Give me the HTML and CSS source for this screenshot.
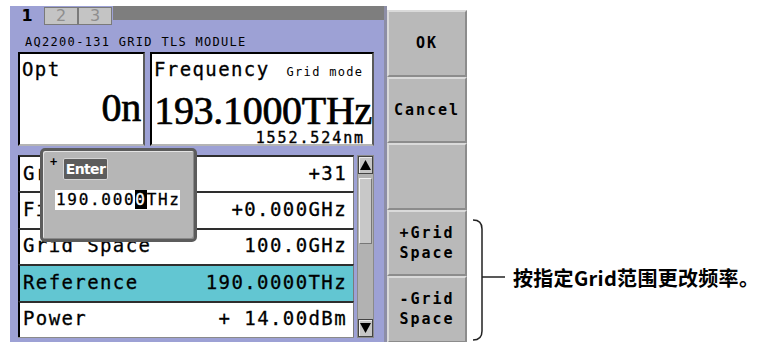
FILE: index.html
```html
<!DOCTYPE html>
<html lang="zh">
<head>
  <meta charset="UTF-8">
  <title>AQ2200-131 GRID TLS MODULE</title>
  <link rel="stylesheet" href="styles.css">
</head>
<body>
  <div class="page">
    <div class="device">
      <!-- LCD screen -->
      <div class="screen">
        <div class="tabs">
          <span class="tab active">1</span>
          <span class="tab">2</span>
          <span class="tab">3</span>
          <span class="tab-fill"></span>
        </div>
        <div class="title">AQ2200-131 GRID TLS MODULE</div>

        <div class="boxes">
          <div class="box opt">
            <div class="box-label">Opt</div>
            <div class="big">0n</div>
          </div>
          <div class="box freq">
            <div class="box-label">Frequency<span class="mode">Grid mode</span></div>
            <div class="big">193.1000THz</div>
            <div class="sub">1552.524nm</div>
          </div>
        </div>

        <div class="list-area">
          <div class="list">
            <div class="row"><span>Grid No.</span><span>+31</span></div>
            <div class="row"><span>Fine</span><span>+0.000GHz</span></div>
            <div class="row"><span>Grid Space</span><span>100.0GHz</span></div>
            <div class="row sel"><span>Reference</span><span>190.0000THz</span></div>
            <div class="row"><span>Power</span><span>+ 14.00dBm</span></div>
          </div>
          <div class="scroll">
            <div class="sbtn">
              <svg width="11" height="10" viewBox="0 0 11 10"><polygon points="5.5,0 11,10 0,10" fill="#000"/></svg>
            </div>
            <div class="thumb"></div>
            <div class="sbtn">
              <svg width="11" height="10" viewBox="0 0 11 10"><polygon points="0,0 11,0 5.5,10" fill="#000"/></svg>
            </div>
          </div>

          <!-- Enter dialog -->
          <div class="popup">
            <div class="popup-head">
              <span class="plus">+</span>
              <span class="enter">Enter</span>
            </div>
            <div class="field">190.000<span class="cursor">0</span>THz</div>
          </div>
        </div>
      </div>

      <!-- soft keys -->
      <div class="keys">
        <div class="key">OK</div>
        <div class="key">Cancel</div>
        <div class="key"></div>
        <div class="key">+Grid<br>Space</div>
        <div class="key">-Grid<br>Space</div>
      </div>
    </div>

    <div class="note">
      <svg class="bracket" width="40" height="124" viewBox="0 0 40 124">
        <path d="M3 2 Q12 2 12 11 L12 113 Q12 122 3 122" fill="none" stroke="#222" stroke-width="1.5"/>
        <line x1="12" y1="59" x2="35" y2="59" stroke="#222" stroke-width="1.5"/>
      </svg>
      <div class="note-text">按指定Grid范围更改频率。</div>
    </div>
  </div>
</body>
</html>
```

FILE: styles.css
```css
* {
  box-sizing: border-box;
}
body {
  margin: 0;
  background: #fff;
  color: #000;
  font-family: "DejaVu Sans Mono", monospace;
}
.page {
  display: flex;
  align-items: flex-start;
  height: 342px;
  padding: 6px 0 0 10px;
  overflow: hidden;
}
.device {
  display: flex;
  align-items: flex-start;
}

/* screen */
.screen {
  position: relative;
  width: 377px;
  height: 340px;
  background: #9da1d5;
  border-right: 3px solid #8d8ea6;
}
.tabs {
  display: flex;
  align-items: flex-start;
  height: 19px;
}
.tab {
  width: 34px;
  height: 18px;
  margin-top: 1px;
  border: 1px solid #7a7a7a;
  background: #c4c4c4;
  color: #8e8e8e;
  font: 16px/16px "DejaVu Sans", sans-serif;
  text-align: center;
}
.tab.active {
  height: 19px;
  margin-top: 0;
  padding-top: 2px;
  border: 0;
  background: transparent;
  color: #000;
  font-weight: bold;
}
.tab-fill {
  flex: 1;
  height: 14px;
  margin-left: 1px;
  background: #7e7e7e;
}
.title {
  height: 27px;
  padding: 11px 0 0 15px;
  font-size: 12px;
  line-height: 12px;
  letter-spacing: 1.3px;
}

.boxes {
  display: flex;
  gap: 5px;
  padding-left: 8px;
}
.box {
  height: 94px;
  padding: 5px 0 0 2px;
  background: #fff;
  border: 2px solid;
  border-color: #000 #5a5a5a #b4b4b4 #000;
  white-space: nowrap;
}
.opt {
  width: 127px;
}
.freq {
  width: 224px;
}
.box-label {
  font-size: 19px;
  line-height: 20px;
  letter-spacing: 1.4px;
  -webkit-text-stroke: 0.3px #000;
}
.mode {
  margin-left: 17px;
  font-size: 12px;
  letter-spacing: 1.3px;
  -webkit-text-stroke: 0;
}
.big {
  margin-top: 11px;
  padding-right: 2px;
  font: 40px/36px "Liberation Serif", serif;
  letter-spacing: -0.3px;
  -webkit-text-stroke: 0.7px #000;
  text-align: right;
}
.freq .big {
  padding-right: 0;
}
.sub {
  margin-top: 2px;
  padding-right: 7px;
  font-size: 15px;
  line-height: 14px;
  letter-spacing: 1.9px;
  -webkit-text-stroke: 0.4px #000;
  text-align: right;
}

/* parameter list */
.list-area {
  position: relative;
  display: flex;
  gap: 3px;
  margin: 9px 0 0 8px;
}
.list {
  display: grid;
  grid-template-rows: repeat(5, 1fr);
  width: 336px;
  height: 183px;
  border-bottom: 1px solid #8a8a8a;
}
.row {
  display: flex;
  justify-content: space-between;
  align-items: center;
  padding: 0 6px 3px 3px;
  background: #fff;
  border-top: 2px solid #2e2e2e;
  border-left: 2px solid #000;
  border-right: 1px solid #7a7a7a;
  font-size: 19px;
  line-height: 20px;
  letter-spacing: 1.4px;
  -webkit-text-stroke: 0.3px #000;
  white-space: nowrap;
}
.row.sel {
  background: #62c6d2;
}
.scroll {
  display: flex;
  flex-direction: column;
  width: 17px;
  height: 183px;
  background: #b2b2b2;
  border: 1px solid #8a8a8a;
}
.sbtn {
  display: flex;
  align-items: center;
  justify-content: center;
  height: 18px;
  background: #c6c6c6;
  border: 1px solid #444;
  box-shadow: inset 1px 1px 0 #ececec;
}
.thumb {
  height: 66px;
  margin: 4px 1px auto;
  background: #c8c8c8;
  border: 1px solid;
  border-color: #f4f4f4 #777 #777 #f4f4f4;
}

/* Enter dialog */
.popup {
  position: absolute;
  left: 22px;
  top: -7px;
  width: 157px;
  height: 94px;
  padding: 7px 0 0 7px;
  background: #b6b6b6;
  border: 3px solid #5c5c5c;
  border-radius: 5px;
  box-shadow: inset 1px 1px 0 #e4e4e4, inset -1px -1px 0 #8a8a8a;
}
.popup-head {
  display: flex;
  align-items: flex-start;
}
.plus {
  width: 13px;
  font-size: 12px;
  font-weight: bold;
  line-height: 9px;
}
.enter {
  width: 45px;
  height: 22px;
  background: #5c5c5c;
  border: 1px solid #d4d4d4;
  border-radius: 2px;
  color: #fff;
  font: bold 14px/20px "DejaVu Sans", sans-serif;
  letter-spacing: -0.6px;
  text-align: center;
}
.field {
  width: 125px;
  height: 20px;
  margin: 10px 0 0 5px;
  padding-left: 1px;
  background: #fff;
  font-size: 16px;
  line-height: 20px;
  letter-spacing: 1.7px;
  -webkit-text-stroke: 0.3px #000;
  white-space: nowrap;
}
.cursor {
  background: #000;
  color: #fff;
  -webkit-text-stroke: 0.3px #fff;
}

/* soft keys */
.keys {
  display: flex;
  flex-direction: column;
  width: 80px;
  margin-top: 4px;
}
.key {
  flex: none;
  display: flex;
  align-items: center;
  justify-content: center;
  height: 66.5px;
  background: #b9b9b9;
  border: 2px solid;
  border-color: #dadada #8c8c8c #8c8c8c #dadada;
  font-size: 15px;
  font-weight: bold;
  line-height: 20px;
  letter-spacing: 2px;
  text-align: center;
}

/* annotation */
.note {
  display: flex;
  margin: 212px 0 0 3px;
}
.note-text {
  margin: 48px 0 0 3px;
  font: bold 20px/24px "Noto Sans CJK SC", sans-serif;
  letter-spacing: 0.3px;
  white-space: nowrap;
}
```
